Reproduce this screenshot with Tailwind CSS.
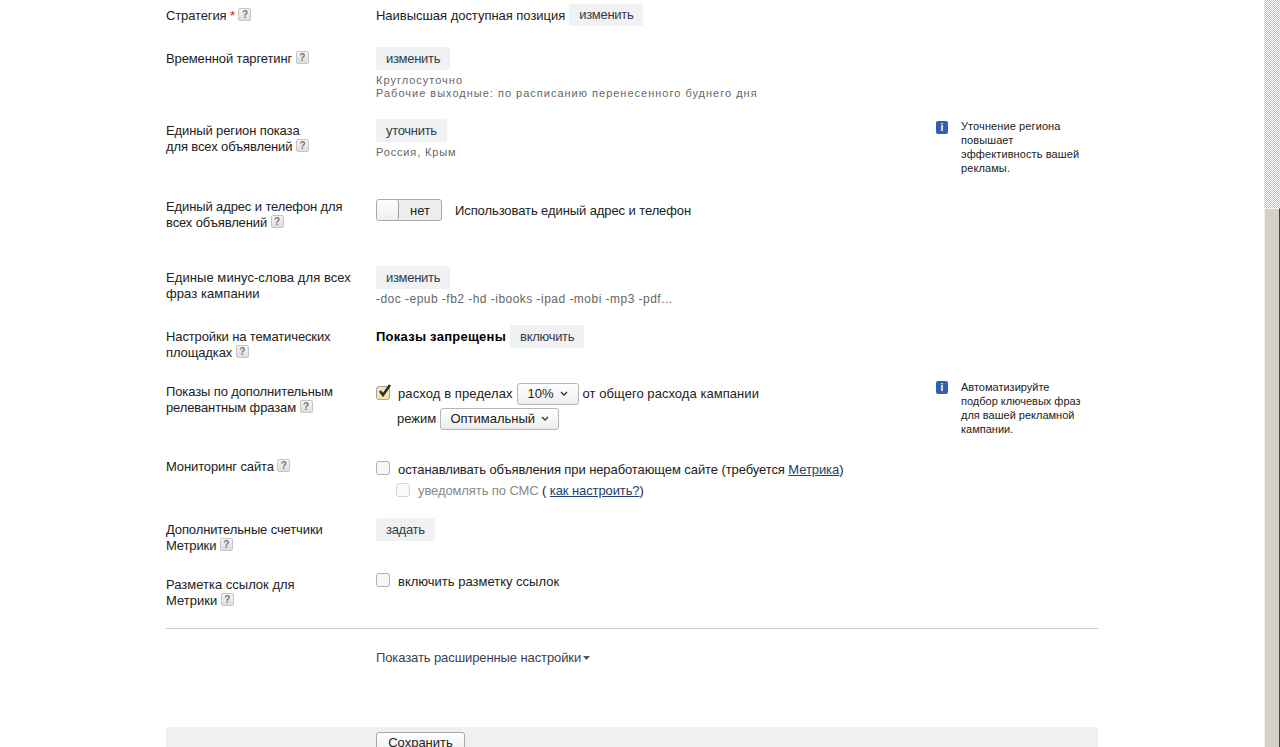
<!DOCTYPE html>
<html lang="en">
<head>
    <meta charset="UTF-8">
    <title>Параметры кампании</title>
    <script src="https://cdn.jsdelivr.net/npm/@tailwindcss/browser@4"></script>
</head>
<body class="h-[747px] overflow-hidden bg-white flex font-['Liberation_Sans',Arial,sans-serif] text-[13px] leading-[16px] text-[#222]">
    <main class="w-[1264px] pl-[166px] pr-[166px] flex flex-col">
        <!-- strategy -->
        <div class="flex h-[47px] pt-[4px]">
            <div class="w-[210px] pt-[4px] tracking-[-0.12px]">Стратегия <span class="text-red-600">*</span> <span class="inline-block align-[2px] w-[13px] h-[13px] rounded-[2px] border border-[#c6c6c6] bg-linear-to-b from-[#f4f4f4] to-[#dedede] text-[10px] leading-[11px] text-center font-bold text-[#777]">?</span></div>
            <div class="flex items-start gap-[4px]"><span class="pt-[4px] tracking-[-0.03px]">Наивысшая доступная позиция</span><button class="h-[22px] px-[10px] rounded-[2px] bg-[#eff1f3] text-[#333c4a] tracking-[-0.3px]">изменить</button></div>
        </div>
        <!-- time targeting -->
        <div class="flex h-[72px]">
            <div class="w-[210px] pt-[4px] tracking-[-0.12px]">Временной таргетинг <span class="inline-block align-[2px] w-[13px] h-[13px] rounded-[2px] border border-[#c6c6c6] bg-linear-to-b from-[#f4f4f4] to-[#dedede] text-[10px] leading-[11px] text-center font-bold text-[#777]">?</span></div>
            <div>
                <button class="h-[23px] px-[10px] rounded-[2px] bg-[#eff1f3] text-[#333c4a] tracking-[-0.3px]">изменить</button>
                <div class="mt-[4px] text-[11px] leading-[13px] tracking-[1px] text-[#666]">Круглосуточно<br>Рабочие выходные: по расписанию перенесенного буднего дня</div>
            </div>
        </div>
        <!-- region -->
        <div class="flex h-[79px]">
            <div class="w-[210px] pt-[4px] tracking-[-0.12px]">Единый регион показа<br>для всех объявлений <span class="inline-block align-[2px] w-[13px] h-[13px] rounded-[2px] border border-[#c6c6c6] bg-linear-to-b from-[#f4f4f4] to-[#dedede] text-[10px] leading-[11px] text-center font-bold text-[#777]">?</span></div>
            <div class="w-[560px]">
                <button class="h-[23px] px-[10px] rounded-[2px] bg-[#eff1f3] text-[#333c4a] tracking-[-0.3px]">уточнить</button>
                <div class="mt-[4px] text-[11px] leading-[13px] tracking-[0.85px] text-[#666]">Россия, Крым</div>
            </div>
            <div class="flex gap-[13px]">
                <span class="mt-[2px] w-[12px] h-[13px] rounded-[2px] bg-[#2f62a8] text-white text-[10px] leading-[13px] text-center font-bold">i</span>
                <p class="w-[125px] text-[11px] leading-[14px] tracking-[0.1px]">Уточнение региона повышает эффективность вашей рекламы.</p>
            </div>
        </div>
        <!-- address -->
        <div class="flex h-[71px]">
            <div class="w-[210px] pt-[1px] tracking-[-0.12px]">Единый адрес и телефон для<br>всех объявлений <span class="inline-block align-[2px] w-[13px] h-[13px] rounded-[2px] border border-[#c6c6c6] bg-linear-to-b from-[#f4f4f4] to-[#dedede] text-[10px] leading-[11px] text-center font-bold text-[#777]">?</span></div>
            <div class="flex items-start gap-[13px] pt-[1px]">
                <div class="w-[66px] h-[22px] rounded-[3px] border border-[#a9a9a9] bg-[#eeeeee] flex">
                    <span class="w-[22px] h-full rounded-[3px] border-r border-[#a0a0a0] bg-linear-to-b from-white to-[#eeeeee]"></span>
                    <span class="flex-1 text-center leading-[21px]">нет</span>
                </div>
                <span class="pt-[4px] tracking-[-0.09px]">Использовать единый адрес и телефон</span>
            </div>
        </div>
        <!-- negative keywords -->
        <div class="flex h-[59px]">
            <div class="w-[210px] pt-[1px] tracking-[0.07px]">Единые минус-слова для всех<br>фраз кампании</div>
            <div class="-mt-[3px]">
                <button class="h-[23px] px-[10px] rounded-[2px] bg-[#eff1f3] text-[#333c4a] tracking-[-0.3px]">изменить</button>
                <div class="mt-[2px] text-[12px] leading-[16px] tracking-[0.47px] text-[#666]">-doc -epub -fb2 -hd -ibooks -ipad -mobi -mp3 -pdf...</div>
            </div>
        </div>
        <!-- thematic -->
        <div class="flex h-[55px]">
            <div class="w-[210px] pt-[1px] tracking-[-0.12px]">Настройки на тематических<br>площадках <span class="inline-block align-[2px] w-[13px] h-[13px] rounded-[2px] border border-[#c6c6c6] bg-linear-to-b from-[#f4f4f4] to-[#dedede] text-[10px] leading-[11px] text-center font-bold text-[#777]">?</span></div>
            <div class="flex items-start gap-[4px] -mt-[3px]"><b class="pt-[4px] text-black tracking-[0.25px]">Показы запрещены</b><button class="h-[23px] px-[10px] rounded-[2px] bg-[#eff1f3] text-[#333c4a] tracking-[-0.3px]">включить</button></div>
        </div>
        <!-- extra phrases -->
        <div class="flex h-[76px]">
            <div class="w-[210px] pt-[1px] tracking-[-0.12px]">Показы по дополнительным<br>релевантным фразам <span class="inline-block align-[2px] w-[13px] h-[13px] rounded-[2px] border border-[#c6c6c6] bg-linear-to-b from-[#f4f4f4] to-[#dedede] text-[10px] leading-[11px] text-center font-bold text-[#777]">?</span></div>
            <div class="w-[560px]">
                <div class="flex items-center gap-[4px] h-[22px]">
                    <span class="relative -top-[1px] w-[14px] h-[14px] mr-[4px] rounded-[3px] border border-[#a5a5a5] bg-[#f3e6b4]">
                        <svg class="absolute -top-[4px] left-0 w-[16px] h-[16px]" viewBox="0 0 16 16"><path d="M3 8l3 4 7-10" fill="none" stroke="#33301f" stroke-width="2.6"/></svg>
                    </span>
                    <span class="tracking-[0.1px]">расход в пределах</span>
                    <span class="w-[62px] h-[22px] rounded-[3px] border border-[#b5b5b5] bg-linear-to-b from-white to-[#eeeeee] flex items-center justify-center gap-[6px]">10%<svg class="w-[8px] h-[6px]" viewBox="0 0 8 6"><path d="M1 1l3 3 3-3" fill="none" stroke="#333" stroke-width="1.3"/></svg></span>
                    <span class="tracking-[0.05px]">от общего расхода кампании</span>
                </div>
                <div class="flex items-center gap-[4px] h-[22px] mt-[3px] pl-[21px]">
                    <span>режим</span>
                    <span class="w-[119px] h-[22px] rounded-[3px] border border-[#b5b5b5] bg-linear-to-b from-white to-[#eeeeee] flex items-center justify-center gap-[6px]">Оптимальный<svg class="w-[8px] h-[6px]" viewBox="0 0 8 6"><path d="M1 1l3 3 3-3" fill="none" stroke="#333" stroke-width="1.3"/></svg></span>
                </div>
            </div>
            <div class="flex gap-[13px]">
                <span class="-mt-[2px] w-[12px] h-[13px] rounded-[2px] bg-[#2f62a8] text-white text-[10px] leading-[13px] text-center font-bold">i</span>
                <p class="-mt-[3px] w-[125px] text-[11px] leading-[14px]">Автоматизируйте подбор ключевых фраз для вашей рекламной кампании.</p>
            </div>
        </div>
        <!-- monitoring -->
        <div class="flex h-[62px]">
            <div class="w-[210px] tracking-[-0.12px]">Мониторинг сайта <span class="inline-block align-[2px] w-[13px] h-[13px] rounded-[2px] border border-[#c6c6c6] bg-linear-to-b from-[#f4f4f4] to-[#dedede] text-[10px] leading-[11px] text-center font-bold text-[#777]">?</span></div>
            <div>
                <div class="flex items-center gap-[8px] h-[18px]"><span class="w-[14px] h-[14px] rounded-[3px] border border-[#b0b0b0] bg-[#f6f6f6]"></span><span class="pt-[4px] tracking-[-0.09px]">останавливать объявления при неработающем сайте (требуется <a class="underline text-[#23406e]">Метрика</a>)</span></div>
                <div class="flex items-center gap-[8px] h-[18px] mt-[4px] pl-[20px] text-[#888]"><span class="w-[14px] h-[14px] rounded-[3px] border border-[#d5d5d5] bg-[#fafafa]"></span><span class="pt-[2px] tracking-[-0.1px]">уведомлять по СМС <span class="text-[#222]">(</span> <a class="underline text-[#23406e]">как настроить?</a><span class="text-[#222]">)</span></span></div>
            </div>
        </div>
        <!-- counters -->
        <div class="flex h-[55px]">
            <div class="w-[210px] pt-[1px] tracking-[-0.12px]">Дополнительные счетчики<br>Метрики <span class="inline-block align-[2px] w-[13px] h-[13px] rounded-[2px] border border-[#c6c6c6] bg-linear-to-b from-[#f4f4f4] to-[#dedede] text-[10px] leading-[11px] text-center font-bold text-[#777]">?</span></div>
            <div class="-mt-[3px]"><button class="h-[23px] px-[10px] rounded-[2px] bg-[#eff1f3] text-[#333c4a] tracking-[-0.3px]">задать</button></div>
        </div>
        <!-- link markup -->
        <div class="flex h-[52px]">
            <div class="w-[210px] pt-[1px]">Разметка ссылок для<br>Метрики <span class="inline-block align-[2px] w-[13px] h-[13px] rounded-[2px] border border-[#c6c6c6] bg-linear-to-b from-[#f4f4f4] to-[#dedede] text-[10px] leading-[11px] text-center font-bold text-[#777]">?</span></div>
            <div class="flex items-center gap-[8px] h-[18px] -mt-[5px]"><span class="w-[14px] h-[14px] rounded-[3px] border border-[#b0b0b0] bg-[#f6f6f6]"></span><span class="pt-[4px]">включить разметку ссылок</span></div>
        </div>
        <div class="h-px bg-[#c8c8c8]"></div>
        <div class="h-[98px] pl-[210px] pt-[21px] text-[#39424f] tracking-[-0.1px]">
            <a class="inline-flex items-center gap-[2px]">Показать расширенные настройки<svg class="w-[7px] h-[4px]" viewBox="0 0 7 4"><path d="M0 0h7L3.500 4z" fill="#555"/></svg></a>
        </div>
        <div class="flex-1 min-h-0 overflow-hidden bg-[#eff0f1] pl-[210px] pt-[5px]">
            <button class="w-[89px] h-[22px] rounded-[3px] border border-[#a8a8a8] bg-linear-to-b from-white to-[#eeeeee] text-center">Сохранить</button>
        </div>
    </main>
    <aside class="w-[16px] flex flex-col">
        <div class="h-[208px] bg-[repeating-conic-gradient(#c9c5bd_0_25%,#ffffff_0_50%)] bg-[length:2px_2px]"></div>
        <div class="flex-1 bg-[#d4d0c8] border-l border-t border-[#f4f2ee] border-r-[#404040] border-r"></div>
    </aside>
</body>
</html>
